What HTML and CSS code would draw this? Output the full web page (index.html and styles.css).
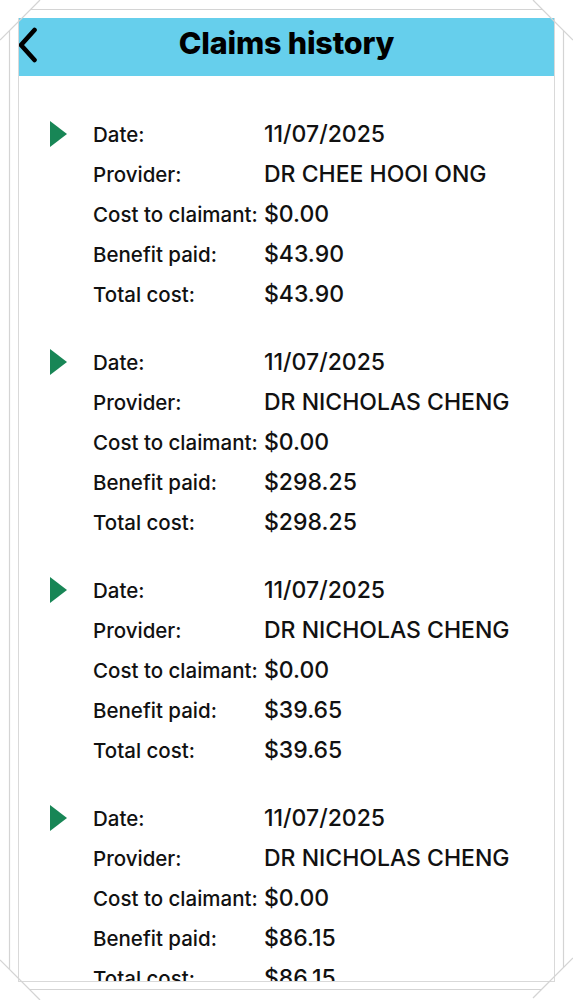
FILE: index.html
```html
<!DOCTYPE html>
<html lang="en">
<head>
  <meta charset="UTF-8">
  <meta name="viewport" content="width=device-width, initial-scale=1.0">
  <title>Claims history</title>
  <link rel="stylesheet" href="styles.css">
</head>
<body>

  <div class="page">
    <div class="screen">
      <header class="topbar">
        <button class="back" aria-label="Back">
          <svg width="22" height="36" viewBox="0 0 22 36">
            <polyline points="16.5,3 3,18 16.5,33" fill="none" stroke="#000" stroke-width="4.6" stroke-linecap="round" stroke-linejoin="round"/>
          </svg>
        </button>
        <h1>Claims history</h1>
        <span></span>
      </header>

      <section class="claims">
        <div class="claim">
          <span class="marker"></span>
          <dl>
            <dt>Date:</dt><dd>11/07/2025</dd>
            <dt>Provider:</dt><dd>DR CHEE HOOI ONG</dd>
            <dt>Cost to claimant:</dt><dd>$0.00</dd>
            <dt>Benefit paid:</dt><dd>$43.90</dd>
            <dt>Total cost:</dt><dd>$43.90</dd>
          </dl>
        </div>

        <div class="claim">
          <span class="marker"></span>
          <dl>
            <dt>Date:</dt><dd>11/07/2025</dd>
            <dt>Provider:</dt><dd>DR NICHOLAS CHENG</dd>
            <dt>Cost to claimant:</dt><dd>$0.00</dd>
            <dt>Benefit paid:</dt><dd>$298.25</dd>
            <dt>Total cost:</dt><dd>$298.25</dd>
          </dl>
        </div>

        <div class="claim">
          <span class="marker"></span>
          <dl>
            <dt>Date:</dt><dd>11/07/2025</dd>
            <dt>Provider:</dt><dd>DR NICHOLAS CHENG</dd>
            <dt>Cost to claimant:</dt><dd>$0.00</dd>
            <dt>Benefit paid:</dt><dd>$39.65</dd>
            <dt>Total cost:</dt><dd>$39.65</dd>
          </dl>
        </div>

        <div class="claim">
          <span class="marker"></span>
          <dl>
            <dt>Date:</dt><dd>11/07/2025</dd>
            <dt>Provider:</dt><dd>DR NICHOLAS CHENG</dd>
            <dt>Cost to claimant:</dt><dd>$0.00</dd>
            <dt>Benefit paid:</dt><dd>$86.15</dd>
            <dt>Total cost:</dt><dd>$86.15</dd>
          </dl>
        </div>
      </section>
    </div>

    <!-- frame drawn over the screenshot edges -->
    <svg class="frame" width="573" height="1000" viewBox="0 0 573 1000">
      <g stroke="#d4d4d4" stroke-width="1.2" fill="none">
        <line x1="31" y1="9.5" x2="542" y2="9.5"/>
        <line x1="30" y1="989.5" x2="541" y2="989.5"/>
        <line x1="9.5" y1="31" x2="9.5" y2="969"/>
        <line x1="563.5" y1="31" x2="563.5" y2="967"/>
        <line x1="0" y1="40" x2="40" y2="0"/>
        <line x1="533" y1="0" x2="573" y2="40"/>
        <line x1="0" y1="960" x2="40" y2="1000"/>
        <line x1="573" y1="958" x2="533" y2="998"/>
      </g>
    </svg>
  </div>

</body>
</html>
```

FILE: styles.css
```css
* {
  margin: 0;
  padding: 0;
  box-sizing: border-box;
}

body {
  font-family: 'Inter', 'Noto Sans', sans-serif;
  background-color: #ffffff;
  color: #111;
}

.page {
  position: relative;
  width: 573px;
  height: 1000px;
  padding: 18px 0 0 18px;
}

.screen {
  width: 537px;
  height: 964px;
  overflow: hidden;
  border: 1px solid #d9d9d9;
  border-top: none;
  background-color: #fff;
}

.topbar {
  display: grid;
  grid-template-columns: 40px 1fr 40px;
  align-items: center;
  height: 58px;
  margin: 0 -1px;
  background-color: #66cfec;
}

.back {
  display: flex;
  align-items: center;
  background: none;
  border: none;
  padding: 0 0 4px 0;
}

.topbar h1 {
  text-align: center;
  font-size: 30.5px;
  font-weight: 800;
  color: #000;
  letter-spacing: -0.2px;
  margin-top: -9px;
}

.claims {
  padding-top: 38px;
}

.claim {
  display: flex;
  align-items: flex-start;
  margin-bottom: 28px;
}

.marker {
  width: 0;
  height: 0;
  margin: 7px 26px 0 31px;
  border-top: 13px solid transparent;
  border-bottom: 13px solid transparent;
  border-left: 17px solid #188656;
}

.claim dl {
  display: grid;
  grid-template-columns: 171px 1fr;
  grid-auto-rows: 40px;
  align-items: baseline;
}

.claim dt {
  font-size: 20.5px;
  font-weight: 500;
  line-height: 40px;
  white-space: nowrap;
}

.claim dd {
  font-size: 23px;
  font-weight: 500;
  line-height: 40px;
  white-space: nowrap;
}

.frame {
  position: absolute;
  top: 0;
  left: 0;
  pointer-events: none;
}
```
